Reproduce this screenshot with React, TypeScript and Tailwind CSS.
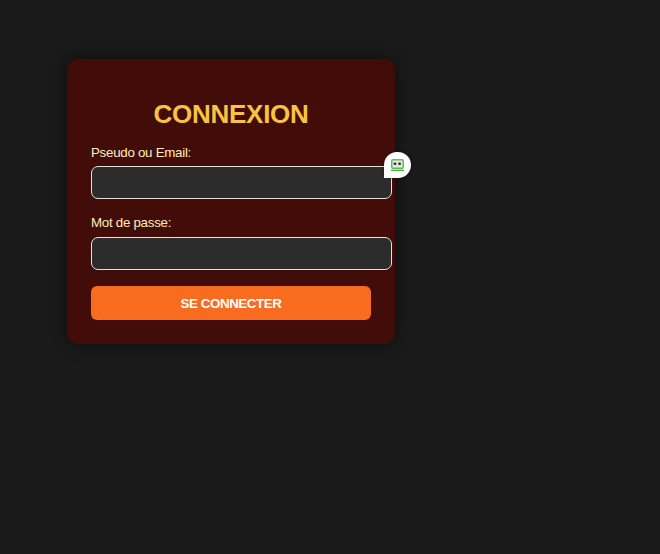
function AssistantBadge() {
  return (
    <div className="absolute left-[293px] -top-[14px] h-[26px] w-[27px] rounded-[13px] rounded-bl-none bg-white pt-[6px] pl-[6px] shadow-[0_0_3px_rgba(0,0,0,0.4)]">
      <svg width="14" height="14" viewBox="0 0 14 14" fill="none">
        <rect x="1.75" y="1.75" width="11.5" height="8.5" rx="1" fill="#e4e9e4" stroke="#5fbf55" strokeWidth="1.5" />
        <rect x="3.7" y="4.5" width="2.6" height="2.6" rx="0.8" fill="#333" />
        <rect x="8.3" y="4.5" width="2.6" height="2.6" rx="0.8" fill="#333" />
        <path d="M1 12.3h13" stroke="#4cb043" strokeWidth="1.4" />
      </svg>
    </div>
  );
}

const inputClass =
  "block h-[33px] w-[301px] rounded-[7px] border border-[#e8dfdc] bg-[#2c2c2c] px-2 text-[13px] text-white outline-none";
const labelClass = "block h-[15px] text-[13.33px] leading-[15px] tracking-[-0.28px] text-[#ffeebb]";

export default function App() {
  return (
    <main className="h-[554px] w-[660px] overflow-hidden bg-[#1a1a1a] pt-[59px] pl-[67px] font-['Liberation_Sans',Arial,sans-serif]">
      <form
        className="h-[285px] w-[328px] rounded-[12px] bg-[#420c09] px-6 pt-10 shadow-[0_0_15px_rgba(0,0,0,0.5)]"
        onSubmit={(e) => e.preventDefault()}
      >
        <h1 className="h-[30px] text-center text-[26px] leading-[30px] font-bold tracking-[-0.25px] text-[#f8c342]">CONNEXION</h1>
        <label htmlFor="login" className={`mt-4 ${labelClass}`}>Pseudo ou Email:</label>
        <div className="relative mt-[6px] w-[301px]">
          <input id="login" type="text" className={inputClass} />
          <AssistantBadge />
        </div>
        <label htmlFor="password" className={`mt-4 ${labelClass}`}>Mot de passe:</label>
        <input id="password" type="password" className={`mt-[7px] ${inputClass}`} />
        <button type="submit" className="mt-4 block h-[34px] w-[280px] rounded-[6px] bg-[#f96c20] pt-px text-[13.33px] font-bold tracking-[-0.4px] text-white">
          SE CONNECTER
        </button>
      </form>
    </main>
  );
}
